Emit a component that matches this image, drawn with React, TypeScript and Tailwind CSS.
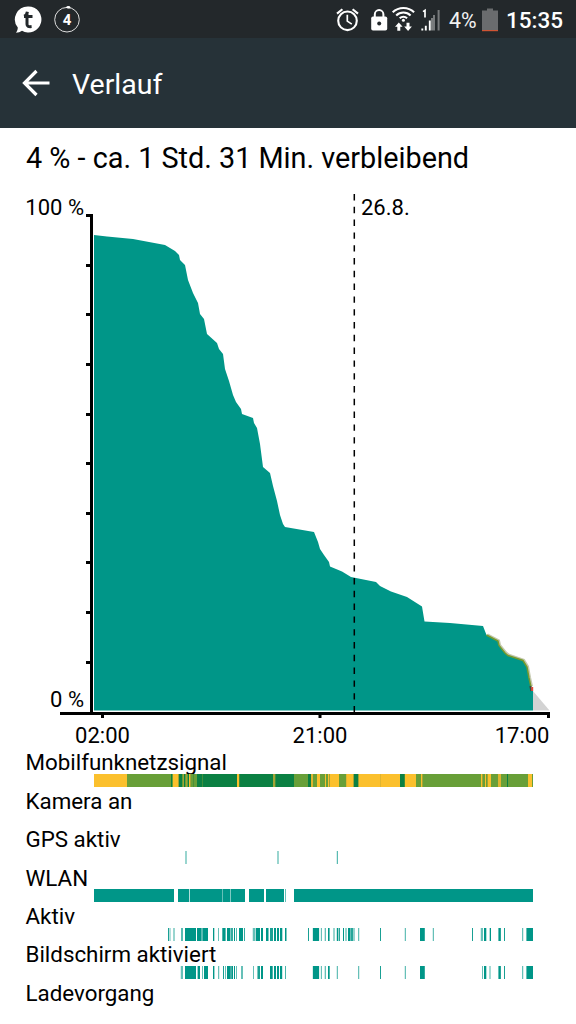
import React from 'react';

// [start, end, opacity]
type Segment = [number, number, number?];

interface TimelineRow {
  label: string;
  segments: Segment[];
}

const TEAL = '#009688';
const DARK = '#0b8043';
const LIGHT = '#689f38';
const OLIVE = '#a3a334';
const YELLOW = '#fbc02d';

const levelPoints =
  '94,235 107,236.5 133,239 165,245 175,251 179,255 180,260 185,265 188,280 193,293 198,303 200,314 204,319 207,334 217,343 219,349 223,354 225,369 229,381 233,395 236,402 241,409 242,414 253,418 254,423 257,428 260,444 263,467 270,473 273,486 277,501 280,515 283,524 285,527 314,532 318,542 320,549 324,555 329,562 330,566.5 342,571.5 351,577 376,582 380,586 391,591.5 407,597 422,606.5 424.5,621.5 450,623 483,626 486.5,635';
const lowPoints =
  '486.5,635 498,641 499,645.5 505,653 508,655.5 523,660.5 527,667 529,678 531,687';

const signalSegments: [number, number, string][] = [
  [94, 127, YELLOW],
  [127, 171, LIGHT],
  [171, 172, DARK],
  [172, 173, LIGHT],
  [173, 178, YELLOW],
  [178, 179, OLIVE],
  [179, 182, DARK],
  [182, 183, LIGHT],
  [183, 184, OLIVE],
  [184, 185, DARK],
  [185, 186, LIGHT],
  [186, 187, OLIVE],
  [187, 188, LIGHT],
  [188, 189, DARK],
  [189, 190, YELLOW],
  [190, 191, OLIVE],
  [191, 193, LIGHT],
  [193, 194, '#4b9139'],
  [194, 197, LIGHT],
  [197, 202, DARK],
  [202, 203, '#3d8f3d'],
  [203, 237, DARK],
  [237, 239, YELLOW],
  [239, 240, '#3d8f3d'],
  [240, 273, DARK],
  [273, 275, OLIVE],
  [275, 276, '#3d8f3d'],
  [276, 294, DARK],
  [294, 308, LIGHT],
  [308, 311, DARK],
  [311, 313, '#e0b430'],
  [313, 317, LIGHT],
  [317, 320, YELLOW],
  [320, 325, LIGHT],
  [325, 326, YELLOW],
  [326, 328, LIGHT],
  [328, 329, YELLOW],
  [329, 330, OLIVE],
  [330, 339, YELLOW],
  [339, 346, LIGHT],
  [346, 347, '#e0b430'],
  [347, 353, YELLOW],
  [353, 354, OLIVE],
  [354, 358, DARK],
  [358, 359, OLIVE],
  [359, 380, YELLOW],
  [380, 381, '#e0b430'],
  [381, 400, YELLOW],
  [400, 404, DARK],
  [404, 405, '#3d8f3d'],
  [405, 416, YELLOW],
  [416, 421, LIGHT],
  [421, 422, YELLOW],
  [422, 423, OLIVE],
  [423, 481, LIGHT],
  [481, 482, YELLOW],
  [482, 483, OLIVE],
  [483, 485, LIGHT],
  [485, 486, YELLOW],
  [486, 487, LIGHT],
  [487, 488, OLIVE],
  [488, 491, YELLOW],
  [491, 498, LIGHT],
  [498, 501, '#e0b430'],
  [501, 507, LIGHT],
  [507, 508, DARK],
  [508, 528, LIGHT],
  [528, 532, YELLOW],
  [532, 533, LIGHT],
];

const rows: TimelineRow[] = [
  { label: 'Kamera an', segments: [] },
  {
    label: 'GPS aktiv',
    segments: [[185, 187, 0.4], [277, 279, 0.4], [336, 337, 0.15], [337, 338, 0.65]],
  },
  {
    label: 'WLAN',
    segments: [
      [94, 174], [178, 189], [189, 190, 0.3], [190, 222], [222, 223, 0.6], [223, 230],
      [230, 231, 0.5], [231, 245], [249, 264], [266, 284], [285, 286, 0.6], [294, 533],
    ],
  },
  {
    label: 'Aktiv',
    segments: [
      [168, 169, 0.9], [169, 171, 0.3], [173, 175, 0.4], [181, 183, 0.65], [185, 196],
      [197, 201], [201, 203, 0.65], [203, 208], [213, 214], [214, 215, 0.3], [218, 219, 0.6],
      [222, 223, 0.7], [223, 225], [225, 226, 0.6], [227, 230], [230, 231, 0.5],
      [231, 233, 0.8], [234, 235], [236, 237, 0.65], [239, 243], [244, 245, 0.8],
      [252, 253, 0.15], [253, 255, 0.6], [255, 256, 0.3], [256, 260], [261, 263],
      [266, 268], [268, 269, 0.5], [270, 273, 0.9], [274, 276], [277, 279], [280, 282],
      [282, 283, 0.3], [285, 286], [286, 287, 0.5], [308, 309, 0.9], [312, 313, 0.15],
      [313, 319], [319, 321, 0.1], [321, 322, 0.6], [324, 325, 0.2], [325, 326, 0.6],
      [328, 329], [329, 330, 0.6], [333, 335, 0.4], [336, 337, 0.2], [337, 338],
      [338, 339, 0.4], [339, 340, 0.85], [343, 344], [345, 347, 0.4], [348, 350],
      [350, 351, 0.6], [351, 353, 0.85], [353, 355, 0.4], [358, 359, 0.6], [359, 360, 0.15],
      [380, 381, 0.9], [404, 405, 0.15], [405, 406, 0.6], [420, 424], [424, 425, 0.8],
      [432, 433, 0.15], [433, 434, 0.6], [472, 473, 0.9], [480, 481, 0.15], [481, 483, 0.6],
      [484, 486], [486, 487, 0.3], [489, 490, 0.3], [490, 491], [498, 499, 0.6],
      [499, 500], [500, 501, 0.85], [504, 505, 0.9], [522, 523, 0.6], [523, 524, 0.15],
      [526, 527, 0.6], [527, 533],
    ],
  },
  {
    label: 'Bildschirm aktiviert',
    segments: [
      [180, 181, 0.15], [181, 183, 0.6], [185, 196], [197, 198, 0.4], [198, 200],
      [202, 203, 0.6], [204, 208], [213, 214], [214, 215, 0.4], [218, 219, 0.6],
      [219, 220, 0.15], [223, 224, 0.9], [225, 226, 0.6], [227, 230], [230, 232, 0.75],
      [232, 233], [234, 235], [236, 237, 0.6], [241, 243, 0.6], [253, 254, 0.6],
      [257, 258, 0.5], [258, 260, 0.9], [261, 263], [270, 272], [272, 273, 0.7],
      [274, 276], [277, 279], [280, 282], [282, 283, 0.2], [285, 286, 0.7],
      [312, 313, 0.15], [313, 319], [319, 321, 0.1], [321, 322, 0.6], [324, 325, 0.2],
      [325, 326, 0.6], [328, 329], [329, 330, 0.7], [336, 337, 0.15], [337, 338, 0.6],
      [358, 359, 0.6], [359, 360, 0.15], [380, 381, 0.9], [404, 405, 0.15],
      [405, 406, 0.6], [420, 424], [424, 425, 0.8], [482, 483, 0.6], [484, 486],
      [486, 487, 0.3], [489, 491, 0.35], [498, 499, 0.6], [499, 500], [500, 501, 0.85],
      [504, 505, 0.9], [522, 523, 0.6], [523, 524, 0.15], [526, 527, 0.6], [527, 533],
    ],
  },
  { label: 'Ladevorgang', segments: [] },
];

const StatusBar: React.FC = () => (
  <div className="flex h-[38px] items-center justify-between bg-[#23282b] text-white">
    <svg className="h-[38px] w-[90px] shrink-0" viewBox="0 0 90 38">
      <path d="M28.5 6.5a13 13 0 1 1-6.5 24.3c-1.8 1.2-3.8 1.9-6 2 1.2-1.7 1.7-3.3 1.8-5.2A13 13 0 0 1 28.5 6.5Z" fill="#fff" />
      <path d="M24 16.3c2.1-.5 3-2.2 3.4-4.5M24 16.4h8.5M27 13v11.2c0 2.2 1.6 2.7 4.6 2.4" fill="none" stroke="#23282b" strokeWidth="3" />
      <circle cx="67" cy="19.7" r="12.3" fill="none" stroke="#ddd" strokeWidth="1" />
      <ellipse cx="68.3" cy="7.3" rx="2" ry="1.2" fill="#fff" />
      <text x="67" y="25.3" textAnchor="middle" className="fill-white text-[15px] font-bold">4</text>
    </svg>
    <div className="flex items-center">
      <svg className="h-[38px] w-[122px] shrink-0" viewBox="324 0 122 38" fill="none" stroke="#fff">
        <circle cx="347.5" cy="20.8" r="9.3" strokeWidth="2.1" />
        <path d="M347.3 14.8v6.3l4.5 3" strokeWidth="1.7" />
        <path d="M337 13.6l5.4-4.4M358 13.6l-5.4-4.4" strokeWidth="2.1" />

        <rect x="371.2" y="16.5" width="16" height="14" rx="1.8" fill="#fff" stroke="none" />
        <path d="M374.8 17v-2.6a4.3 4.3 0 0 1 8.6 0V17" strokeWidth="2" />
        <circle cx="379.2" cy="23.4" r="2" fill="#23282b" stroke="none" />

        <path d="M392.7 13.3a15.4 15.4 0 0 1 21.4 0M396.2 16.4a10.5 10.5 0 0 1 14.4 0M399.7 19.3a5.5 5.5 0 0 1 7.4 0" strokeWidth="2.1" transform="translate(0 -1)" />
        <circle cx="403.4" cy="20.3" r="1.5" fill="#fff" stroke="none" />
        <path d="M395 26.8l3.8-4.3 3.8 4.3h-2.3v3.9h-3v-3.9zM404.2 26.6h2.3v-3.900h3v3.900h2.400l-3.800 4.300z" fill="#fff" stroke="none" />

        <path d="M423 11.6l2-1.3v7.2" strokeWidth="1.7" />
        <path d="M422.3 28.5v2M425.8 25.8v4.7M429.8 20.5v10" strokeWidth="1.9" />
        <path d="M434 15v15.5M438.6 10v20.5" strokeWidth="2" stroke="#777a7c" />
        <path d="M432 18v12.5" strokeWidth=".8" />
      </svg>
      <span className="w-[36px] pl-[3px] pt-[3px] text-[21.3px] leading-none text-[#f2f2f2]">4%</span>
      <svg className="h-[38px] w-[16px] shrink-0" viewBox="0 0 16 38">
        <path d="M5 8.5h6v2h5V30H0V10.5h5z" fill="#6a6c6e" />
        <rect y="30" width="16" height="1.2" fill="#cf5434" />
      </svg>
      <span className="w-[78px] pl-[8px] pt-[3px] text-[22.5px] font-medium leading-none">15:35</span>
    </div>
  </div>
);

const BatteryChart: React.FC = () => (
  <svg className="block h-[562px] w-full" viewBox="0 189 576 562">
    <polygon points={`${levelPoints} ${lowPoints} 533,691 533,710.5 94,710.5`} fill={TEAL} />
    <polygon points="533,691 549.5,710.5 533,710.5" fill="#d3d3d3" />
    <polyline points={lowPoints} fill="none" stroke="#c5c9b0" strokeWidth="2" transform="translate(1 -.7)" />
    <polyline points={lowPoints} fill="none" stroke="#769a2c" strokeWidth="1.5" />
    <path d="M530.3 686l1 5" stroke="#3b4a40" strokeWidth="2" />
    <path d="M532.2 687v4" stroke="#e0493a" strokeWidth="2" />

    {/* axes */}
    <path d="M90 214h3v501h-3z" />
    <path d="M60 712h490v3H60z" />
    <path d="M86 214h5v3h-5z" />
    {Array.from({ length: 9 }, (_, i) => (
      <rect key={i} x="86" y={Math.round(263.7 + i * 49.6)} width="5" height="3" />
    ))}
    <path d="M101 714h3v4h-3zM318.5 714h3v4h-3zM547 714h3v4h-3z" />
    <path d="M354.3 194V712" stroke="#000" strokeWidth="1.5" strokeDasharray="6.4 6.4" />

    <g className="text-[22px]" fill="#000">
      <text x="84" y="214.5" textAnchor="end">100 %</text>
      <text x="361" y="214.5">26.8.</text>
      <text x="84" y="707" textAnchor="end">0 %</text>
      <text x="102.5" y="743" textAnchor="middle">02:00</text>
      <text x="320" y="743" textAnchor="middle">21:00</text>
      <text x="549.5" y="743" textAnchor="end">17:00</text>
    </g>
  </svg>
);

interface TimelineProps {
  label: string;
  children?: React.ReactNode;
}

const Timeline: React.FC<TimelineProps> = ({ label, children }) => (
  <div className="h-[38.4px]">
    <div className="h-[23px] pl-[25.5px] pt-[0.35px] text-[22.35px] leading-[23px]">{label}</div>
    <svg className="block h-[13px] w-full" viewBox="0 0 576 13">
      {children}
    </svg>
  </div>
);

export default function App() {
  return (
    <div className="h-[1024px] w-[576px] overflow-hidden bg-white font-[Roboto,'Liberation_Sans',sans-serif] text-black">
      <StatusBar />
      <header className="flex h-[90px] items-center bg-[#263238] pl-[22px] text-white">
        <svg width="28" height="28" viewBox="0 0 28 28" fill="none" stroke="#fff" strokeWidth="3.2">
          <path d="M27.5 14H3M14.5 2L2.5 14l12 12" />
        </svg>
        <h1 className="pl-[22px] pt-[5px] text-[28.5px] font-normal leading-none">Verlauf</h1>
      </header>
      <h2 className="h-[61px] whitespace-nowrap pl-[26px] pt-[13px] text-[28.8px] font-normal leading-[34px]">
        4 % - ca. 1 Std. 31 Min. verbleibend
      </h2>
      <BatteryChart />
      <Timeline label="Mobilfunknetzsignal">
        {signalSegments.map(([start, end, color]) => (
          <rect key={start} x={start} y="0" width={end - start} height="13" fill={color} />
        ))}
      </Timeline>
      {rows.map(row => (
        <Timeline key={row.label} label={row.label}>
          {row.segments.map(([start, end, opacity = 1]) => (
            <rect key={start} x={start} y="0" width={end - start} height="13" fill={TEAL} opacity={opacity} />
          ))}
        </Timeline>
      ))}
    </div>
  );
}
